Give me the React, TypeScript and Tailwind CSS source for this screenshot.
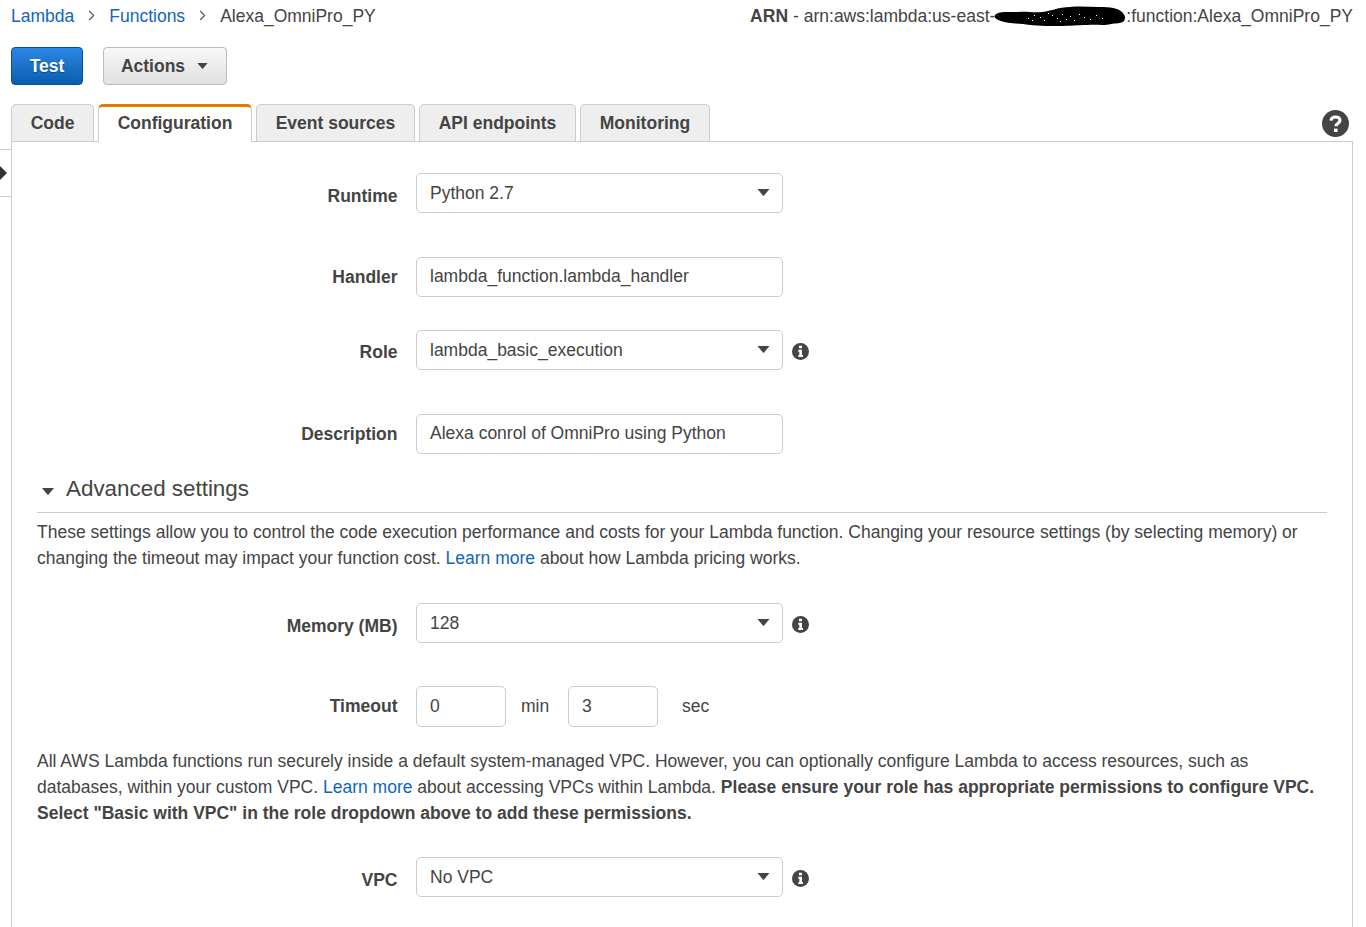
import React from 'react';
import { ChevronRight } from 'lucide-react';

const tabs = [
  { label: 'Code', width: 'w-[83px]' },
  { label: 'Configuration', width: 'w-[154px]' },
  { label: 'Event sources', width: 'w-[159px]' },
  { label: 'API endpoints', width: 'w-[157px]' },
  { label: 'Monitoring', width: 'w-[130px]' },
];

// speckles left over from the scribble over the account id
const specks = [
  [34, 12], [40, 9], [46, 11], [50, 14], [58, 9], [63, 12], [68, 8], [72, 13], [76, 10],
  [80, 14], [85, 8], [90, 11], [96, 13], [102, 9], [108, 12], [54, 7], [38, 14], [66, 15],
];

const Caret = ({ className }: { className: string }) => (
  <svg viewBox="0 0 12 7" className={className} fill="currentColor">
    <path d="M0 0h12L6.6 6.4a.8.8 0 0 1-1.2 0z" />
  </svg>
);

const Link = ({ children }: { children: React.ReactNode }) => (
  <a href="#" className="text-[#1166bb]">{children}</a>
);

const InfoIcon = () => (
  <svg viewBox="0 0 17 17" className="ml-[9px] mt-[2px] w-[17px] h-[17px] shrink-0">
    <circle cx="8.5" cy="8.5" r="8.5" fill="#444" />
    <path d="M7 2.8h3v2.5H7zM6.3 6.7H10v5.4h1v2H6.3v-2h1V8.7h-1z" fill="#fff" />
  </svg>
);

const Field = ({ value, select, info, up }: { value: string; select?: boolean; info?: boolean; up?: boolean }) => (
  <>
    <div className={`w-[367px] h-10 border border-[#ccc] rounded-[5px] bg-white flex items-center justify-between pl-[13px] pr-[12px] ${up ? 'pb-[3px]' : 'pb-[1px]'}`}>
      <span>{value}</span>
      {select && <Caret className="w-[13px] h-[7px] text-[#444]" />}
    </div>
    {info && <InfoIcon />}
  </>
);

const Row = ({ label, className, labelClass, children }: { label: string; className: string; labelClass: string; children: React.ReactNode }) => (
  <div className={`flex items-center ${className}`}>
    <label className={`w-[385.5px] text-right font-bold mr-[18.5px] ${labelClass}`}>{label}</label>
    {children}
  </div>
);

export default function App() {
  return (
    <div className="relative h-[927px] overflow-hidden bg-white text-[#444] text-[17.5px] leading-[26px] font-['Liberation_Sans',Arial,sans-serif]">
      {/* side panel toggle */}
      <div className="absolute left-0 top-[149px] w-[11px] h-[48px] border-y border-[#ccc] flex items-center">
        <svg viewBox="0 0 7 14" className="w-[7px] h-[14px] text-[#333]" fill="currentColor">
          <path d="M0 0l7 7-7 7z" />
        </svg>
      </div>

      <div className="pl-[11px] pr-[13px]">
        {/* breadcrumbs + ARN */}
        <div className="h-[31px] flex items-center justify-between">
          <div className="flex items-center">
            <Link>Lambda</Link>
            <ChevronRight className="w-[17px] h-[17px] mx-[9px] text-[#555]" strokeWidth={1.5} />
            <Link>Functions</Link>
            <ChevronRight className="w-[17px] h-[17px] mx-[9px] text-[#555]" strokeWidth={1.5} />
            <span>Alexa_OmniPro_PY</span>
          </div>
          <div className="flex items-center">
            <span className="font-bold">ARN</span>
            <span className="ml-[5px]">- arn:aws:lambda:us-east-</span>
            <svg viewBox="0 0 133 20" className="w-[133px] h-[20px] -mx-[1px]">
              <path d="M1 9C4 5 14 6 24 6c10-1 14 1 24 0 10-1 16-5 28-5 10-1 20 0 30 0 10 0 18 1 22 5 3 3 4 6 2 9-3 3-9 2-13 3-8 2-14 0-24 1-10 0-16 1-28 1-12 0-22 0-36-2C10 17 -1 14 1 9z" fill="#000" />
              {specks.map(([x, y]) => (
                <rect key={`${x}-${y}`} x={x} y={y} width="1" height="1" fill="#fff" />
              ))}
            </svg>
            <span>:function:Alexa_OmniPro_PY</span>
          </div>
        </div>

        {/* actions */}
        <div className="mt-[16px] flex gap-[20px] h-[38px]">
          <button className="w-[72px] rounded-[4px] border border-[#0b4f92] bg-gradient-to-b from-[#2b87e3] to-[#0a5db0] text-white font-bold [text-shadow:0_1px_1px_#0a4a8a]">Test</button>
          <button className="w-[124px] rounded-[4px] border border-[#bbb] bg-gradient-to-b from-[#f8f8f8] to-[#e1e1e1] font-bold flex items-center justify-center gap-[11px]">
            Actions
            <Caret className="w-[13px] h-[6px] text-[#444]" />
          </button>
        </div>

        {/* tabs */}
        <div className="mt-[19px] h-[38px] -mb-px flex items-end justify-between relative">
          <div className="flex gap-[4px]">
            {tabs.map((t) =>
              t.label === 'Configuration' ? (
                <div key={t.label} className={`relative z-10 h-[38px] ${t.width} pb-[4px] font-bold flex items-center justify-center bg-white border-x border-[#ccc] border-t-[3px] border-t-[#e47b00] rounded-t-[5px]`}>
                  {t.label}
                </div>
              ) : (
                <div key={t.label} className={`h-[37px] ${t.width} font-bold flex items-center justify-center bg-[#eee] border border-b-0 border-[#ccc] rounded-t-[5px]`}>
                  {t.label}
                </div>
              )
            )}
          </div>
          <svg viewBox="0 0 27 27" className="w-[27px] h-[27px] mb-[5px] mr-[4px]">
            <circle cx="13.5" cy="13.5" r="13.5" fill="#444" />
            <path d="M9 10.6c.3-2.4 2-3.6 4.5-3.6 2.6 0 4.4 1.4 4.4 3.5 0 3-3.9 2.9-3.9 5.4v.4" fill="none" stroke="#fff" strokeWidth="3.2" />
            <rect x="12" y="18.6" width="3.6" height="3.4" fill="#fff" />
          </svg>
        </div>

        {/* configuration panel */}
        <div className="border border-[#ccc] h-[800px] pt-[31px]">
          <Row label="Runtime" className="h-10" labelClass="pt-[5px]">
            <Field value="Python 2.7" select />
          </Row>
          <Row label="Handler" className="h-10 mt-[44px]" labelClass="pb-[1px]">
            <Field value="lambda_function.lambda_handler" up />
          </Row>
          <Row label="Role" className="h-10 mt-[33px]" labelClass="pt-[3px]">
            <Field value="lambda_basic_execution" select info />
          </Row>
          <Row label="Description" className="h-10 mt-[44px]" labelClass="pb-[1px]">
            <Field value="Alexa conrol of OmniPro using Python" up />
          </Row>

          <div className="mx-[25px]">
            <div className="h-[59px] border-b border-[#ccc] flex items-center pt-[12px] pl-[5px]">
              <Caret className="w-[12px] h-[7px] text-[#444] mr-[12px] mt-[5px]" />
              <h2 className="text-[22.4px] leading-[30px]">Advanced settings</h2>
            </div>
            <p className="mt-[6px]">
              These settings allow you to control the code execution performance and costs for your Lambda function. Changing your resource settings (by selecting memory) or changing the timeout may impact your function cost. <Link>Learn more</Link> about how Lambda pricing works.
            </p>
          </div>

          <Row label="Memory (MB)" className="h-10 mt-[32px]" labelClass="pt-[5px]">
            <Field value="128" select info />
          </Row>
          <Row label="Timeout" className="h-[41px] mt-[43px]" labelClass="pb-[1px]">
            <div className="w-[90px] h-[41px] border border-[#ccc] rounded-[5px] flex items-center pl-[13px] pb-[2px]">0</div>
            <span className="ml-[15px] w-[47px] pb-[2px]">min</span>
            <div className="w-[90px] h-[41px] border border-[#ccc] rounded-[5px] flex items-center pl-[13px] pb-[2px]">3</div>
            <span className="ml-[24px] pb-[2px]">sec</span>
          </Row>

          <p className="mx-[25px] mt-[21px]">
            All AWS Lambda functions run securely inside a default system-managed VPC. However, you can optionally configure Lambda to access resources, such as databases, within your custom VPC. <Link>Learn more</Link> about accessing VPCs within Lambda. <b>Please ensure your role has appropriate permissions to configure VPC. Select "Basic with VPC" in the role dropdown above to add these permissions.</b>
          </p>

          <Row label="VPC" className="h-10 mt-[31px]" labelClass="pt-[5px]">
            <Field value="No VPC" select info />
          </Row>
        </div>
      </div>
    </div>
  );
}
